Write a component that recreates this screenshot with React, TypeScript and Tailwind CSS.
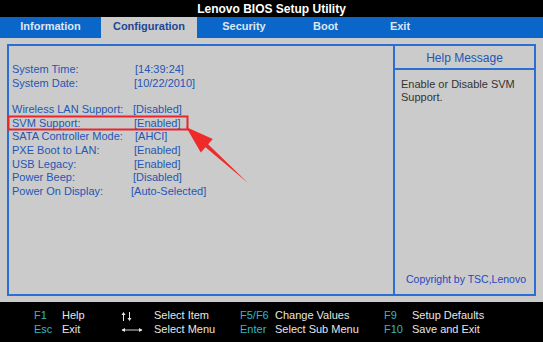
const tabs = [
  { label: 'Information', w: 'w-[101px]' },
  { label: 'Configuration', w: 'w-[96px]', active: true },
  { label: 'Security', w: 'w-[94px]' },
  { label: 'Boot', w: 'w-[69px]' },
  { label: 'Exit', w: 'w-[80px]' },
];

const items = [
  { label: 'System Time:', value: '[14:39:24]', off: 'pl-[1px]' },
  { label: 'System Date:', value: '[10/22/2010]', off: '' },
  { label: 'Wireless LAN Support:', value: '[Disabled]', off: '-ml-[1px]', gap: true },
  { label: 'SVM Support:', value: '[Enabled]', off: '' },
  { label: 'SATA Controller Mode:', value: '[AHCI]', off: 'pl-[1px]' },
  { label: 'PXE Boot to LAN:', value: '[Enabled]', off: '' },
  { label: 'USB Legacy:', value: '[Enabled]', off: '' },
  { label: 'Power Beep:', value: '[Disabled]', off: '-ml-[1px]' },
  { label: 'Power On Display:', value: '[Auto-Selected]', off: '-ml-[3px]' },
];

function UpDown() {
  return (
    <svg width="11" height="13" viewBox="0 0 11 13" className="inline-block">
      <path d="M2.5 11V3 M8.5 2v8" stroke="#e6e6e6" strokeWidth="1" />
      <path d="M2.5 2l-2 3h4z M8.5 11l-2-3h4z" fill="#e6e6e6" />
    </svg>
  );
}

function LeftRight() {
  return (
    <svg width="22" height="13" viewBox="0 0 22 13" className="inline-block">
      <path d="M1 7h20" stroke="#e6e6e6" strokeWidth="0.9" />
      <path d="M0.5 7l3.5-2v4z M21.5 7l-3.5-2v4z" fill="#e6e6e6" />
    </svg>
  );
}

const keys: React.ReactNode[][] = [
  ['F1', 'Help', <UpDown />, 'Select Item', 'F5/F6', 'Change Values', 'F9', 'Setup Defaults'],
  ['Esc', 'Exit', <LeftRight />, 'Select Menu', 'Enter', 'Select Sub Menu', 'F10', 'Save and Exit'],
];

export default function App() {
  return (
    <div className="relative w-[543px] h-[342px] overflow-hidden bg-[#cbcbcb] font-['Liberation_Sans',Arial,sans-serif]">
      {/* title */}
      <div className="h-[17px] bg-black text-center text-[12px] font-bold leading-[18px] text-white">
        Lenovo BIOS Setup Utility
      </div>

      {/* tabs */}
      <div className="flex h-[21px] bg-[#0a66c9]">
        {tabs.map((t) => (
          <div
            key={t.label}
            className={`${t.w} text-center text-[11px] font-bold leading-[19px] ${
              t.active ? 'bg-[#cbcbcb] text-[#1d4796]' : 'text-[#dfe6f2]'
            }`}
          >
            {t.label}
          </div>
        ))}
      </div>

      {/* body */}
      <div className="h-[264px] px-[7px] pt-[6px] pb-[6px]">
        <div className="flex h-full border-2 border-[#2a6fd2]">
          <div className="w-[384px] pl-[3px] pt-[17px] text-[11px] leading-[13.6px] text-[#2456b4]">
            {items.map((it) => (
              <div key={it.label} className={`flex ${it.gap ? 'mt-[13px]' : ''}`}>
                <span className="w-[122px] shrink-0">{it.label}</span>
                <span className={it.off}>{it.value}</span>
              </div>
            ))}
          </div>
          <div className="flex flex-1 flex-col border-l-2 border-[#2a6fd2]">
            <div className="h-[24px] border-b-2 border-[#2a6fd2] text-center text-[12px] leading-[25px] text-[#2456b4]">
              Help Message
            </div>
            <div className="pl-[6px] pt-[8px] text-[11px] leading-[13px] text-[#333333]">
              Enable or Disable SVM
              <br />
              Support.
            </div>
            <div className="mt-auto pb-[6px] pl-[3px] text-center text-[10.5px] text-[#2447c0]">
              Copyright by TSC,Lenovo
            </div>
          </div>
        </div>
      </div>

      {/* footer */}
      <div className="h-[40px] bg-black pl-[34px] pt-[7px] text-[11px] leading-[13px] text-[#e6e6e6]">
        {keys.map((row, r) => (
          <div key={r} className="grid grid-cols-[28px_59px_33px_86px_35px_109px_28px_1fr]">
            {row.map((c, i) => (
              <span key={i} className={i % 2 === 0 ? 'text-[#35b6c6]' : ''}>
                {c}
              </span>
            ))}
          </div>
        ))}
      </div>

      {/* annotation */}
      <svg className="pointer-events-none absolute left-0 top-0" width="543" height="342">
        <rect x="8.5" y="116.5" width="179" height="13" fill="none" stroke="#e8262b" strokeWidth="2" />
        <polygon
          points="186,127 200.8,152.5 205.5,147.3 248,183 208.1,144.3 212.8,139.1"
          fill="#ee2a2a"
        />
      </svg>
    </div>
  );
}
